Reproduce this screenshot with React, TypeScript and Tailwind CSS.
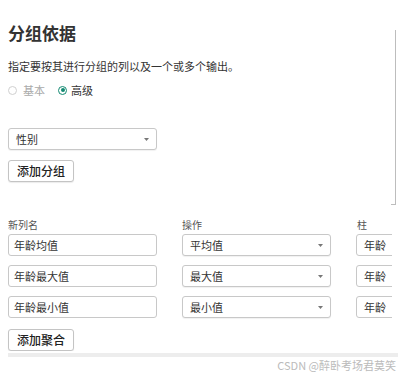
import React from 'react';

const font = { fontFamily: '"Noto Sans CJK SC", "Noto Sans", sans-serif' };

const Caret = () => (
    <svg width="5" height="3" viewBox="0 0 5 3" className="shrink-0">
        <path d="M0 0 L5 0 L2.5 3 Z" fill="#777" />
    </svg>
);

const SelectBox: React.FC<{ value: string; className?: string }> = ({ value, className = '' }) => (
    <div className={`h-[22px] border border-[#c8c8c8] rounded-[3px] bg-white flex items-center justify-between pl-[7px] pr-[7px] text-[11px] text-[#333] shadow-[0_1px_1px_rgba(0,0,0,0.06)] ${className}`}>
        <span>{value}</span>
        <Caret />
    </div>
);

const TextBox: React.FC<{ value: string; className?: string }> = ({ value, className = '' }) => (
    <div className={`h-[22px] border border-[#c8c8c8] rounded-[3px] bg-white flex items-center pl-[5px] text-[11px] text-[#333] ${className}`}>
        {value}
    </div>
);

const Button: React.FC<{ label: string }> = ({ label }) => (
    <div className="w-[66px] h-[22px] border border-[#c4c4c4] rounded-[3px] bg-white flex items-center justify-center text-[12px] text-[#222] font-medium shadow-[0_1px_1px_rgba(0,0,0,0.08)]">
        {label}
    </div>
);

const rows = [
    { name: '年龄均值', op: '平均值', col: '年龄' },
    { name: '年龄最大值', op: '最大值', col: '年龄' },
    { name: '年龄最小值', op: '最小值', col: '年龄' },
];

export default function App() {
    return (
        <div className="relative w-[400px] h-[373px] bg-white overflow-hidden" style={font}>
            {/* panel edge on the right */}
            <div className="absolute left-[395px] top-[30px] w-[1px] h-[175px] bg-[#bdbdbd]" />
            <div className="absolute left-[391px] top-[204px] w-[5px] h-[1px] bg-[#bdbdbd]" />

            <div className="w-[392px] overflow-hidden pl-[8px] pt-[22px]">
                <h1 className="text-[17px] leading-[22px] font-bold text-[#333]">分组依据</h1>

                <p className="mt-[15px] text-[11px] leading-[14px] text-[#333]">指定要按其进行分组的列以及一个或多个输出。</p>

                <div className="mt-[10px] flex items-center text-[11px] leading-[14px]">
                    <span className="w-[9px] h-[9px] rounded-full border border-[#d0d0d0] bg-white" />
                    <span className="ml-[6px] text-[#aaa]">基本</span>
                    <span className="ml-[13px] w-[9px] h-[9px] rounded-full border-[1.5px] border-[#138a72] flex items-center justify-center">
                        <span className="w-[4px] h-[4px] rounded-full bg-[#138a72]" />
                    </span>
                    <span className="ml-[4px] text-[#333]">高级</span>
                </div>

                <SelectBox value="性别" className="mt-[31px] w-[149px]" />

                <div className="mt-[10px]">
                    <Button label="添加分组" />
                </div>

                <div className="mt-[37px] flex gap-[25px] text-[10px] leading-[12px] text-[#555]">
                    <span className="w-[149px] shrink-0">新列名</span>
                    <span className="w-[149px] shrink-0">操作</span>
                    <span className="w-[149px] shrink-0 pl-[1px]">柱</span>
                </div>

                <div className="mt-[3px] flex flex-col gap-[9px]">
                    {rows.map(r => (
                        <div key={r.name} className="flex gap-[25px]">
                            <TextBox value={r.name} className="w-[149px] shrink-0" />
                            <SelectBox value={r.op} className="w-[149px] shrink-0" />
                            <TextBox value={r.col} className="w-[149px] shrink-0 pl-[7px]" />
                        </div>
                    ))}
                </div>

                <div className="mt-[11px]">
                    <Button label="添加聚合" />
                </div>
            </div>

            <div className="ml-[8px] mt-[2px] h-[4px] w-[390px] bg-[#ededed]" />

            <div className="mt-[2px] pr-[4px] text-right text-[11px] leading-[13px] text-[#bbb]">CSDN @醉卧考场君莫笑</div>
        </div>
    );
}
